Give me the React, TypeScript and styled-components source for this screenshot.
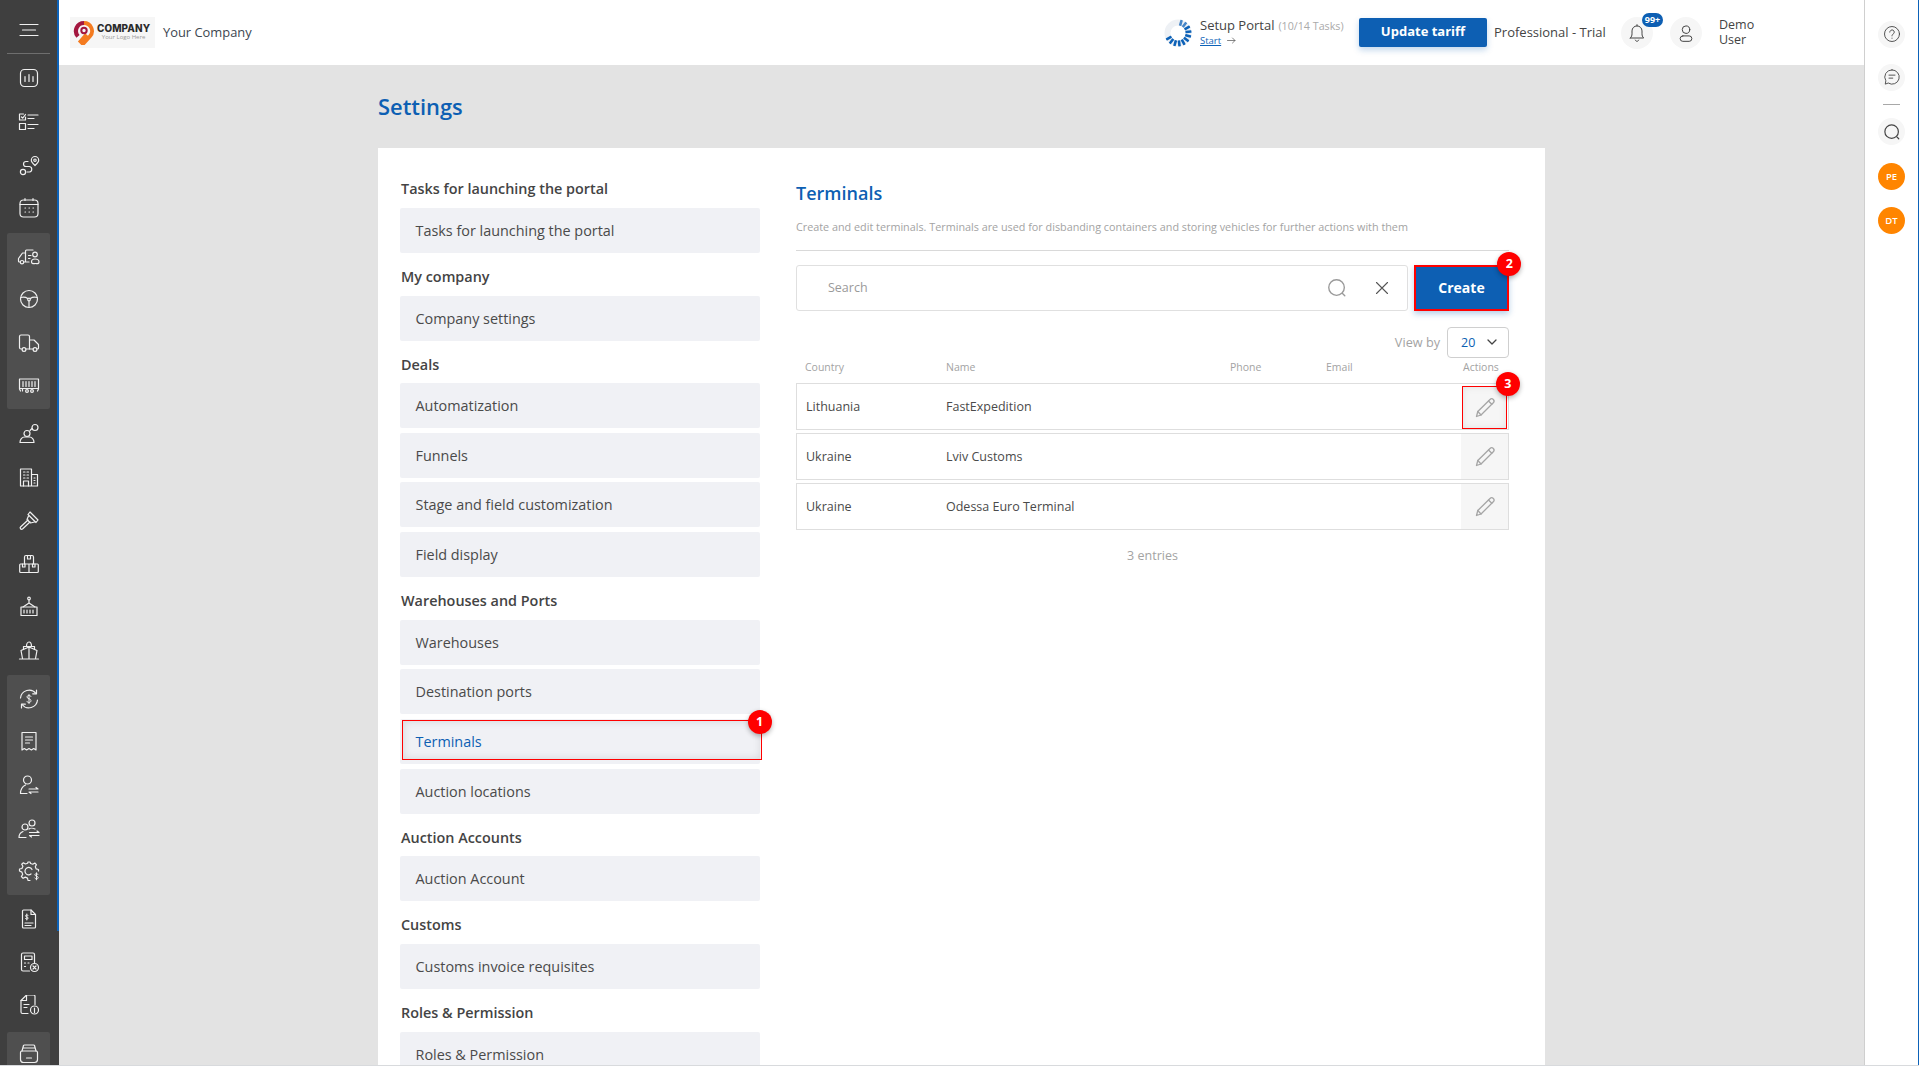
import styled, { createGlobalStyle } from "styled-components";
import type { ReactNode } from "react";

const GlobalStyle = createGlobalStyle`
  html, body {
    margin: 0;
    padding: 0;
    height: 100%;
    overflow: hidden;
    background: #fff;
    font-family: "Open Sans", "Liberation Sans", sans-serif;
    color: #444;
  }
  * { box-sizing: border-box; }
`;

const Page = styled.div`
  display: flex;
  height: 1066px;
  overflow: hidden;
  border-bottom: 1px solid #d8dadd;
`;

const Sidebar = styled.aside`
  position: relative;
  width: 59px;
  flex: none;
  background: #3f3f3f;
  &::after {
    content: "";
    position: absolute;
    top: 0;
    right: 0;
    width: 2px;
    height: 931px;
    background: #0d62b8;
  }
`;

const MenuTop = styled.div`
  height: 54px;
  margin: 0 9px 0 7px;
  display: flex;
  align-items: center;
  justify-content: center;
  padding-top: 6px;
  border-bottom: 1px solid #6e6e6e;
`;

const NavList = styled.nav`
  display: flex;
  flex-direction: column;
  padding-top: 2px;
`;

const NavGroup = styled.div`
  margin: 3px 9px 3px 7px;
  padding: 1.5px 0;
  background: #4f4f4f;
  border-radius: 2px;
`;

const NavItem = styled.div<{ $grouped?: boolean }>`
  height: 43.4px;
  display: flex;
  align-items: center;
  justify-content: center;
  margin: ${(p) => (p.$grouped ? "0" : "0 9px 0 7px")};
`;

const NavSvg = styled.svg`
  width: 24px;
  height: 24px;
  fill: none;
  stroke: #f0f0f0;
  stroke-width: 1.2;
  stroke-linecap: round;
  stroke-linejoin: round;
`;

const Main = styled.div`
  flex: 1;
  min-width: 0;
  display: flex;
  flex-direction: column;
`;

const Header = styled.header`
  height: 65px;
  flex: none;
  background: #fff;
  display: flex;
  align-items: center;
  padding-left: 11px;
`;

const LogoBox = styled.div`
  width: 85px;
  height: 31px;
  background: #f6f6f6;
  display: flex;
  align-items: center;
  padding-left: 3px;
  gap: 2px;
`;

const LogoPin = styled.svg`
  width: 22px;
  height: 25px;
  flex: none;
`;

const LogoText = styled.div`
  display: flex;
  flex-direction: column;
  align-items: center;
`;

const LogoName = styled.span`
  font-size: 9.9px;
  line-height: 10px;
  font-weight: 800;
  color: #2b2b2b;
  letter-spacing: 0.1px;
  font-family: "Inter", sans-serif;
`;

const LogoTag = styled.span`
  font-size: 6px;
  line-height: 9px;
  color: #9a9a9a;
`;

const CompanyName = styled.span`
  margin: 0 0 1px 8px;
  font-size: 12.9px;
  color: #3c4650;
`;

const HeaderRight = styled.div`
  margin-left: auto;
  display: flex;
  align-items: center;
`;

const Spinner = styled.svg`
  width: 28px;
  height: 28px;
  margin-right: 8px;
`;

const Setup = styled.div`
  width: 159px;
  margin-bottom: 2px;
  display: flex;
  flex-direction: column;
`;

const SetupTitle = styled.div`
  font-size: 13px;
  line-height: 16px;
  color: #444;
  white-space: nowrap;
`;

const SetupCount = styled.span`
  font-size: 10.7px;
  color: #aaa;
  margin-left: 4px;
`;

const StartLink = styled.div`
  font-size: 9.5px;
  line-height: 13px;
  color: #0d62b8;
  display: flex;
  align-items: center;
  gap: 6px;
  span {
    text-decoration: underline;
  }
`;

const UpdateButton = styled.button`
  width: 128px;
  height: 29px;
  border: none;
  border-radius: 2px;
  padding: 0 0 3px;
  background: #0d5fb3;
  color: #fff;
  font: 700 13px "Open Sans", sans-serif;
  box-shadow: 0 3px 6px rgba(13, 95, 179, 0.25);
`;

const Plan = styled.span`
  margin: 0 0 2px 7px;
  width: 127px;
  font-size: 13px;
  color: #444;
  white-space: nowrap;
`;

const RoundIcon = styled.div<{ $size?: number }>`
  position: relative;
  flex: none;
  width: ${(p) => p.$size ?? 32}px;
  height: ${(p) => p.$size ?? 32}px;
  border-radius: 50%;
  background: #f6f6f6;
  display: flex;
  align-items: center;
  justify-content: center;
`;

const UserIcon = styled(RoundIcon)`
  margin-left: 17px;
`;

const CountBadge = styled.span`
  position: absolute;
  top: -4px;
  right: -10px;
  width: 21px;
  height: 14px;
  border-radius: 7px;
  background: #0d5fb3;
  color: #fff;
  font-size: 9px;
  font-weight: 700;
  line-height: 14px;
  text-align: center;
`;

const UserName = styled.div`
  margin: 0 0 2px 17px;
  width: 145px;
  font-size: 12.5px;
  line-height: 15px;
  color: #444;
`;

const LineSvg = styled.svg<{ $stroke?: string; $width?: number }>`
  fill: none;
  stroke: ${(p) => p.$stroke ?? "#444"};
  stroke-width: ${(p) => p.$width ?? 1.2};
  stroke-linecap: round;
  stroke-linejoin: round;
`;

const Content = styled.main`
  flex: 1;
  min-height: 0;
  overflow: hidden;
  background: #e3e3e3;
  padding-top: 26px;
`;

const Wrap = styled.div`
  width: 1167px;
  margin: 0 auto;
`;

const PageTitle = styled.h1`
  margin: 0 0 25px;
  font-size: 21.9px;
  line-height: 32px;
  font-weight: 600;
  color: #0d5fb3;
`;

const Panel = styled.section`
  background: #fff;
  display: grid;
  grid-template-columns: 360px 713px;
  column-gap: 36px;
  padding: 21.8px 36px 40px 22px;
`;

const SideColumn = styled.div`
  display: flex;
  flex-direction: column;
`;

const GroupTitle = styled.div`
  margin: 7.6px 0 6.5px 1px;
  font-size: 14.4px;
  line-height: 24px;
  font-weight: 600;
  color: #444;
`;

const SideItem = styled.div<{ $active?: boolean }>`
  position: relative;
  height: 45px;
  margin-bottom: 4.6px;
  padding-left: 15.5px;
  display: flex;
  align-items: center;
  border-radius: 2px;
  background: #f0f1f5;
  font-size: 14.4px;
  color: ${(p) => (p.$active ? "#0d5fb3" : "#4a4a4a")};
`;

const Callout = styled.div`
  position: absolute;
  top: 1px;
  left: 2px;
  right: -2px;
  bottom: 4px;
  border: 1px solid #f00;
  box-shadow: inset 0 0 8px rgba(0, 0, 0, 0.12);
`;

const Marker = styled.span<{ $top: number; $right: number }>`
  position: absolute;
  top: ${(p) => -p.$top}px;
  right: ${(p) => -p.$right}px;
  z-index: 2;
  width: 24px;
  height: 24px;
  border-radius: 50%;
  background: #f00;
  color: #fff;
  font-size: 12.5px;
  font-weight: 700;
  line-height: 24px;
  text-align: center;
  box-shadow: 0 2px 5px rgba(0, 0, 0, 0.3);
`;

const TerminalsColumn = styled.div`
  display: flex;
  flex-direction: column;
`;

const TerminalsTitle = styled.h2`
  margin: 11.2px 0 0;
  font-size: 18px;
  line-height: 24px;
  font-weight: 600;
  color: #0d5fb3;
`;

const Description = styled.p`
  margin: 14.4px 0 0;
  padding-bottom: 14.2px;
  font-size: 10.8px;
  line-height: 16px;
  color: #a3a3a3;
  border-bottom: 1px solid #d9d9d9;
`;

const SearchRow = styled.div`
  margin-top: 14px;
  display: flex;
  gap: 6px;
`;

const SearchBox = styled.div`
  flex: 1;
  height: 46px;
  border: 1px solid #e0e0e0;
  border-radius: 3px;
  display: flex;
  align-items: center;
  padding: 0 18px 0 31px;
`;

const SearchPlaceholder = styled.span`
  flex: 1;
  font-size: 12.5px;
  color: #9a9a9a;
`;

const SearchClear = styled.span`
  margin-left: 27px;
  display: flex;
`;

const CreateButton = styled.button`
  position: relative;
  width: 95px;
  height: 46px;
  border: 2px solid #f00;
  background: #0d5fb3;
  color: #fff;
  font: 700 14px "Open Sans", sans-serif;
  box-shadow: 0 3px 6px rgba(13, 95, 179, 0.3);
`;

const ViewRow = styled.div`
  margin-top: 16px;
  display: flex;
  justify-content: flex-end;
  align-items: center;
  gap: 7px;
`;

const ViewLabel = styled.span`
  font-size: 12.7px;
  color: #a3a3a3;
`;

const ViewSelect = styled.div`
  width: 62px;
  height: 31px;
  border: 1px solid #cfcfcf;
  border-radius: 4px;
  display: flex;
  align-items: center;
  justify-content: space-between;
  padding: 0 11px 0 13px;
  font-size: 12.5px;
  color: #0d5fb3;
`;

const columns = "141px 284px 96px 1fr 46px";

const TableHead = styled.div`
  margin-top: 2px;
  height: 23.8px;
  display: grid;
  grid-template-columns: ${columns};
  align-items: start;
  padding-left: 9px;
  font-size: 10.5px;
  line-height: 15px;
  color: #a3a3a3;
`;

const HeadActions = styled.span`
  white-space: nowrap;
`;

const TableRow = styled.div`
  position: relative;
  height: 47px;
  margin-bottom: 3px;
  display: grid;
  grid-template-columns: 140px 283.5px 96px 1fr 47px;
  align-items: center;
  padding-left: 9px;
  border: 1px solid #dedede;
  font-size: 12.5px;
  color: #4a4a4a;
`;

const EditCell = styled.div<{ $marked?: boolean }>`
  position: relative;
  align-self: stretch;
  background: #f6f6f6;
  display: flex;
  align-items: center;
  justify-content: center;
  margin-left: ${(p) => (p.$marked ? "1px" : "0")};
  ${(p) =>
    p.$marked &&
    "outline: 1px solid #f00; outline-offset: -1px; margin-right: 1px; margin-top: 1.500px; box-shadow: inset 0 0 8px rgba(0,0,0,0.1);"}
`;

const EntryCount = styled.div`
  margin-top: 13px;
  text-align: center;
  font-size: 12.5px;
  line-height: 20px;
  color: #a3a3a3;
`;

const Rail = styled.aside`
  position: relative;
  width: 55px;
  flex: none;
  background: #fff;
  border-left: 1px solid #cfcfcf;
  border-right: 1px solid #0d62b8;
  display: flex;
  flex-direction: column;
  align-items: center;
  padding-top: 20.5px;
`;

const RailDivider = styled.div`
  width: 17px;
  height: 1px;
  background: #a8a8a8;
  margin: 13px 0 13.5px;
`;

const RailAvatar = styled.div`
  width: 27px;
  height: 27px;
  border-radius: 50%;
  background: #ff8500;
  color: #fff;
  font-size: 9.5px;
  font-weight: 600;
  line-height: 27px;
  text-align: center;
  margin-top: 17.5px;
`;

const RailGap = styled.div`
  height: 16px;
`;

const navIcons: Record<string, ReactNode> = {
  dashboard: (
    <>
      <rect x="3.500" y="3.500" width="17" height="17" rx="4" />
      <path d="M8 10.500v5M12 8.500v7M16 10.500v5" />
    </>
  ),
  tasks: (
    <g transform="translate(0 2)">
      <path d="M8.500 6v3h-6V3h4M4.500 6l1.200 1.200L8.500 3.500" />
      <rect x="2.500" y="12.500" width="6" height="6" />
      <path d="M11 4h10M11 7.500h6M11 13.500h10M11 17.500h6" />
    </g>
  ),
  route: (
    <g transform="translate(0 2)">
      <circle cx="6" cy="18" r="2.600" />
      <path d="M18 11.500c-2.200-2-3.700-3.500-3.700-5.300a3.700 3.700 0 0 1 7.400 0c0 1.800-1.500 3.300-3.700 5.300z" />
      <circle cx="18" cy="6.200" r="1.200" />
      <path d="M10 18h2.500a2.800 2.800 0 0 0 0-5.500H9a2.500 2.500 0 0 1 0-5h2" />
    </g>
  ),
  calendar: (
    <>
      <rect x="3" y="4" width="18" height="17" rx="3.500" />
      <path d="M3 8.500h18M8 2.500v2M16 2.500v2" />
      <path d="M8 12h.5M12 12h.5M16 12h.5M8 16h.5M12 16h.5M16 16h.5" />
    </>
  ),
  truckPerson: (
    <>
      <path d="M3.200 18H2.500c-.8 0-1-.5-1-1.200v-2.300L5.500 9h3V7c0-.6.400-1 1-1H16" />
      <path d="M12 18H7M8.500 9v9" />
      <circle cx="5" cy="18.200" r="1.700" />
      <path d="M11.500 11.500h2.500M11.500 14.500H13" />
      <circle cx="18" cy="10.500" r="2.300" />
      <path d="M14.500 18c0-2 1.500-3 3.500-3s4 1 4 3-1.500 1.500-3.500 1.500-4 .5-4-1.500z" />
    </>
  ),
  wheel: (
    <>
      <circle cx="12" cy="12" r="8.500" />
      <circle cx="12" cy="12.500" r="1.300" />
      <path d="M3.700 10.500c2.500-.5 5-.5 7 1M20.300 10.500c-2.500-.5-5-.5-7 1M12 14v6.500" />
    </>
  ),
  truck: (
    <>
      <path d="M5 18H4c-1 0-1.500-.5-1.500-1.500V5.500C2.500 4.500 3 4 4 4h7c1 0 1.500.5 1.500 1.500V18H9" />
      <path d="M12.500 9H17l4.500 4.500V17c0 .6-.4 1-1 1H20M16 18h-3.500" />
      <circle cx="7" cy="18.500" r="1.900" />
      <circle cx="18" cy="18.500" r="1.900" />
    </>
  ),
  container: (
    <>
      <path d="M2.500 5h19v10l-1 2M2.500 5v10l1 2M2.500 14.500h19" />
      <path d="M6 7.500v5M9 7.500v5M12 7.500v5M15 7.500v5M18 7.500v5" />
      <path d="M5.500 15v2" />
      <circle cx="10" cy="17" r="1.400" />
      <circle cx="15" cy="17" r="1.400" />
    </>
  ),
  personPin: (
    <>
      <circle cx="10" cy="11.500" r="3" />
      <path d="M3 20.500c0-3 2-5.500 4.500-5.500h5c2.500 0 4.500 2.500 4.500 5.500H3z" />
      <path d="M13 8.500l2-2" />
      <circle cx="18" cy="5.500" r="3" />
    </>
  ),
  building: (
    <>
      <path d="M3.500 21V4h11v17M14.500 9.500h6V21H3.500" />
      <path d="M6.500 7h1.500M10 7h1.500M6.500 10h1.500M10 10h1.500M6.500 13h1.500M10 13h1.500" />
      <path d="M6.500 21v-5h5v5M17 13h1M17 15.500h1M17 18h1" />
    </>
  ),
  gavel: (
    <>
      <path d="M13 3l8 8-2 2.500-8-8z" />
      <path d="M11.500 7l-1.500 3.500 3.500 3.500 4-1" />
      <path d="M11 11l-7.500 7c-1 1 .5 3 2 2l7.500-7" />
    </>
  ),
  boxes: (
    <>
      <path d="M7.500 12V5c0-1 .5-1.500 1.500-1.500h6c1 0 1.500.5 1.500 1.500v7" />
      <path d="M10.500 3.500v3.500h3V3.500" />
      <path d="M3.500 12h17c.6 0 .8.400.8 1v6.500c0 .6-.4 1-1 1H3.700c-.6 0-1-.4-1-1V13c0-.6.200-1 .8-1zM12 12v8.500" />
      <path d="M5.500 12v3h2.500v-3M15.500 12v3H18v-3" />
    </>
  ),
  crane: (
    <>
      <circle cx="12" cy="3.500" r="1.300" />
      <path d="M12 5v3M12 8L6 12M12 8l6 4" />
      <path d="M4 12h16v8.500H4zM7 15v3M10 15v3M13 15v3M16 15v3" />
    </>
  ),
  ship: (
    <g transform="translate(0 -1)">
      <path d="M2.500 21h19" />
      <path d="M5.500 20.500L4 12.500l8-3.500 8 3.500-1.500 8M12 9v11.500" />
      <path d="M6.500 11.500V8.500h11v3M9.500 8.500c0-2.500 1-4.500 2.500-4.500s2.500 2 2.500 4.500" />
    </g>
  ),
  refresh: (
    <>
      <path d="M3.500 11a8.700 8.700 0 0 1 15.500-4.500M20.500 13a8.700 8.700 0 0 1-15.500 4.500" />
      <path d="M19.500 3v3.800h-3.800M4.500 21v-3.800h3.800" />
      <path d="M14 9.500c-.5-.8-1-1-2-1-1.300 0-2 .6-2 1.500 0 2.200 4 1.300 4 3.700 0 1-.8 1.800-2 1.800-1 0-1.700-.4-2.200-1.200M12 7.500v9" strokeWidth="1" />
    </>
  ),
  receipt: (
    <g transform="translate(0 -1)">
      <path d="M5 3.500h14v17.500l-2.300-1.500-2.300 1.500-2.400-1.500-2.400 1.500-2.300-1.500L5 21z" />
      <path d="M8.500 8h7M8.500 11h7M8.500 14h4" />
    </g>
  ),
  userSwap: (
    <>
      <circle cx="10.500" cy="7" r="4" />
      <path d="M3.500 20.500c0-4 2-7 5-8.500M3.500 20.500H10" />
      <path d="M12 16h9l-2-1.500M21 19h-9l2 1.500" />
    </>
  ),
  usersSwap: (
    <>
      <circle cx="8" cy="10" r="3" />
      <circle cx="15" cy="6" r="3" />
      <path d="M2 20.500c0-3 1.500-5 4-6M2 20.500h7M12 12c1-1 4-1 6 0" />
      <path d="M12.500 15.500H22l-2-1.500M22 18.500h-9.500l2 1.500" />
    </>
  ),
  gearDollar: (
    <>
      <path d="M13 20.500h-2l-.5-2.400-2.200-1-2.200 1.200-1.700-1.800 1.300-2.100-.8-2.300L2.500 11V9l2.400-.5 1-2.200L4.700 4.300l1.700-1.500 2 1.200L10.600 3.300 11 2h2l.6 1.500 2.200.7 2-1.200 1.600 1.600-1.100 2.100.8 2.200 2.400.6v1.500" />
      <path d="M15 9.500A3.700 3.700 0 1 0 14 14" />
      <path d="M21 14.500c-.4-.6-.9-.8-1.600-.8-1 0-1.500.4-1.500 1.100 0 1.600 3.300 1 3.300 2.800 0 .8-.7 1.300-1.700 1.300-.8 0-1.400-.3-1.800-.9M19.500 12.800v7" strokeWidth="1" />
    </>
  ),
  docDollar: (
    <g transform="translate(0 -1)">
      <path d="M6.500 3h7.500l4.500 4.500V20c0 .8-.5 1-1 1h-11c-.5 0-1-.2-1-1V4c0-.8.5-1 1-1z" />
      <path d="M14 3v4.500h4.500M8 16h8M8 18.500h6" />
      <path d="M11 8.500c-.3-.4-.6-.6-1.200-.6-.8 0-1.300.4-1.300 1 0 1.300 2.700.8 2.700 2.200 0 .6-.6 1-1.400 1-.6 0-1.100-.2-1.400-.7M9.800 7v6" strokeWidth="1" />
    </g>
  ),
  calcX: (
    <g transform="translate(0 -2)">
      <path d="M12.500 21H6c-1 0-1.500-.5-1.500-1.500V4.500C4.500 3.500 5 3 6 3h10c1 0 1.500.5 1.500 1.500v8" />
      <path d="M7.500 6h7.500v3.500H7.500zM7.500 13h1M11 13h1M7.500 16.500h1" />
      <circle cx="17.500" cy="17.500" r="4" />
      <path d="M16 16l3 3M19 16l-3 3" />
    </g>
  ),
  docInfo: (
    <g transform="translate(0 -2.500)">
      <path d="M11 21H5.500c-1 0-1.500-.5-1.500-1.500V8l5.500-5.500h7c1 0 1.500.5 1.500 1.500v8" />
      <path d="M4 8h5.500V2.500M7 12h5M7 15h3" />
      <circle cx="17.500" cy="17.500" r="4" />
      <path d="M17.500 15.500v4.500" />
    </g>
  ),
  archive: (
    <g transform="translate(0 -1.500)">
      <path d="M5 9.500h14c1 0 1.500.5 1.500 1.500v7c0 2-1 3-3 3h-11c-2 0-3-1-3-3v-7c0-1 .5-1.500 1.500-1.500z" />
      <path d="M5 9.500L6.500 4c.2-.5.5-.5 1-.5h9c.5 0 .8 0 1 .5l1.500 5.500M6.500 6.500h11M9.500 16.500h5" />
    </g>
  ),
};

const NavIcon = ({ name, grouped }: { name: string; grouped?: boolean }) => (
  <NavItem $grouped={grouped}>
    <NavSvg viewBox="0 0 24 24">{navIcons[name]}</NavSvg>
  </NavItem>
);

const PencilIcon = () => (
  <LineSvg width="24" height="24" viewBox="0 0 24 24" $stroke="#a6a6a6" $width={1.300}>
    <path d="M3.500 20.500l1.300-5L17 3.500a2.300 2.300 0 0 1 3.300 3.300L8 19z" />
    <path d="M15.500 5l3.300 3.300M4.800 15.500L8 19" />
  </LineSvg>
);

const sideGroups = [
  { title: "Tasks for launching the portal", items: ["Tasks for launching the portal"] },
  { title: "My company", items: ["Company settings"] },
  {
    title: "Deals",
    items: ["Automatization", "Funnels", "Stage and field customization", "Field display"],
  },
  {
    title: "Warehouses and Ports",
    items: ["Warehouses", "Destination ports", "Terminals", "Auction locations"],
  },
  { title: "Auction Accounts", items: ["Auction Account"] },
  { title: "Customs", items: ["Customs invoice requisites"] },
  { title: "Roles & Permission", items: ["Roles & Permission"] },
];

const terminals = [
  { country: "Lithuania", name: "FastExpedition" },
  { country: "Ukraine", name: "Lviv Customs" },
  { country: "Ukraine", name: "Odessa Euro Terminal" },
];

// ticks run clockwise from the top, the last few are left out as the faded tail
const spinnerTicks = Array.from({ length: 11 }, (_, i) => i);

function App() {
  return (
    <>
      <GlobalStyle />
      <Page>
        <Sidebar>
          <MenuTop>
            <LineSvg width="20" height="14" viewBox="0 0 20 14" $stroke="#f0f0f0" $width={1.200}>
              <path d="M1 1.500h18M3.500 7h13M1 12.500h18" />
            </LineSvg>
          </MenuTop>
          <NavList>
            {["dashboard", "tasks", "route", "calendar"].map((n) => (
              <NavIcon key={n} name={n} />
            ))}
            <NavGroup>
              {["truckPerson", "wheel", "truck", "container"].map((n) => (
                <NavIcon key={n} name={n} grouped />
              ))}
            </NavGroup>
            {["personPin", "building", "gavel", "boxes", "crane", "ship"].map((n) => (
              <NavIcon key={n} name={n} />
            ))}
            <NavGroup>
              {["refresh", "receipt", "userSwap", "usersSwap", "gearDollar"].map((n) => (
                <NavIcon key={n} name={n} grouped />
              ))}
            </NavGroup>
            {["docDollar", "calcX", "docInfo"].map((n) => (
              <NavIcon key={n} name={n} />
            ))}
            <NavGroup>
              <NavIcon name="archive" grouped />
            </NavGroup>
          </NavList>
        </Sidebar>
        <Main>
          <Header>
            <LogoBox>
              <LogoPin viewBox="0 0 22 25">
                <path d="M11 3a8 8 0 0 0-6 13.300" fill="none" stroke="#a3173f" strokeWidth="4.200" />
                <path d="M11 3a8 8 0 0 1 6 13.300L10 24l-2.500-2.500 6-7" fill="none" stroke="#f47b20" strokeWidth="3.800" />
                <circle cx="11" cy="10.500" r="2.700" fill="none" stroke="#a3173f" strokeWidth="2" />
              </LogoPin>
              <LogoText>
                <LogoName>COMPANY</LogoName>
                <LogoTag>Your Logo Here</LogoTag>
              </LogoText>
            </LogoBox>
            <CompanyName>Your Company</CompanyName>
            <HeaderRight>
              <Spinner viewBox="0 0 28 28">
                <circle cx="14" cy="14" r="10.500" fill="none" stroke="#eef1f5" strokeWidth="6" />
                {spinnerTicks.map((i) => (
                  <rect
                    key={i}
                    x="12.700"
                    y="0.500"
                    width="2.600"
                    height="6"
                    rx="0.500"
                    fill="#0d62b8"
                    opacity={i < 2 ? 0.75 : 1}
                    transform={`rotate(${((i + 0.7) * 360) / 16} 14 14)`}
                  />
                ))}
              </Spinner>
              <Setup>
                <SetupTitle>
                  Setup Portal<SetupCount>(10/14 Tasks)</SetupCount>
                </SetupTitle>
                <StartLink>
                  <span>Start</span>
                  <LineSvg width="9" height="7" viewBox="0 0 9 7" $stroke="#666" $width={0.8}>
                    <path d="M.5 3.500h7.500M5.500 1l2.500 2.500L5.500 6" />
                  </LineSvg>
                </StartLink>
              </Setup>
              <UpdateButton>Update tariff</UpdateButton>
              <Plan>Professional - Trial</Plan>
              <RoundIcon>
                <LineSvg width="20" height="20" viewBox="0 0 24 24">
                  <path d="M4 18c1.500-1.500 2-3 2-5V9.500a6 6 0 0 1 12 0V13c0 2 .5 3.500 2 5H4z" />
                  <path d="M10 20.500c.5 1 1.200 1.500 2 1.500s1.500-.5 2-1.500M12 2v1.500" />
                </LineSvg>
                <CountBadge>99+</CountBadge>
              </RoundIcon>
              <UserIcon>
                <LineSvg width="20" height="20" viewBox="0 0 24 24">
                  <circle cx="12" cy="8" r="4.500" />
                  <rect x="5" y="15.500" width="14" height="6.500" rx="3.200" />
                </LineSvg>
              </UserIcon>
              <UserName>
                Demo
                <br />
                User
              </UserName>
            </HeaderRight>
          </Header>
          <Content>
            <Wrap>
              <PageTitle>Settings</PageTitle>
              <Panel>
                <SideColumn>
                  {sideGroups.map((group) => (
                    <div key={group.title}>
                      <GroupTitle>{group.title}</GroupTitle>
                      {group.items.map((item) => (
                        <SideItem key={item} $active={item === "Terminals"}>
                          {item}
                          {item === "Terminals" && (
                            <Callout>
                              <Marker $top={11.300} $right={10.700}>1</Marker>
                            </Callout>
                          )}
                        </SideItem>
                      ))}
                    </div>
                  ))}
                </SideColumn>
                <TerminalsColumn>
                  <TerminalsTitle>Terminals</TerminalsTitle>
                  <Description>
                    Create and edit terminals. Terminals are used for disbanding containers and
                    storing vehicles for further actions with them
                  </Description>
                  <SearchRow>
                    <SearchBox>
                      <SearchPlaceholder>Search</SearchPlaceholder>
                      <LineSvg width="22" height="22" viewBox="0 0 24 24" $stroke="#9a9a9a" $width={1.500}>
                        <circle cx="11.500" cy="11.500" r="8.500" />
                        <path d="M18 18l2.500 2.500" />
                      </LineSvg>
                      <SearchClear>
                        <LineSvg width="14" height="14" viewBox="0 0 14 14" $stroke="#555" $width={1.100}>
                          <path d="M1.500 1.500l11 11M12.500 1.500l-11 11" />
                        </LineSvg>
                      </SearchClear>
                    </SearchBox>
                    <CreateButton>
                      Create
                      <Marker $top={14.400} $right={14.400}>2</Marker>
                    </CreateButton>
                  </SearchRow>
                  <ViewRow>
                    <ViewLabel>View by</ViewLabel>
                    <ViewSelect>
                      20
                      <LineSvg width="10" height="6" viewBox="0 0 10 6" $stroke="#444" $width={1.300}>
                        <path d="M1 1l4 4 4-4" />
                      </LineSvg>
                    </ViewSelect>
                  </ViewRow>
                  <TableHead>
                    <span>Country</span>
                    <span>Name</span>
                    <span>Phone</span>
                    <span>Email</span>
                    <HeadActions>Actions</HeadActions>
                  </TableHead>
                  {terminals.map((row, i) => (
                    <TableRow key={row.name}>
                      <span>{row.country}</span>
                      <span>{row.name}</span>
                      <span />
                      <span />
                      <EditCell $marked={i === 0}>
                        <PencilIcon />
                        {i === 0 && <Marker $top={14.300} $right={12.900}>3</Marker>}
                      </EditCell>
                    </TableRow>
                  ))}
                  <EntryCount>3 entries</EntryCount>
                </TerminalsColumn>
              </Panel>
            </Wrap>
          </Content>
        </Main>
        <Rail>
          <RoundIcon $size={27}>
            <LineSvg width="18" height="18" viewBox="0 0 24 24">
              <circle cx="12" cy="12" r="10" />
              <path d="M9 9.500a3 3 0 1 1 4.500 2.600c-1 .6-1.500 1.200-1.500 2.400M12 17.500v.3" />
            </LineSvg>
          </RoundIcon>
          <RailGap />
          <RoundIcon $size={27}>
            <LineSvg width="18" height="18" viewBox="0 0 24 24">
              <path d="M12 2.500a9.500 9.500 0 1 1-5 17.500l-4 1.500.8-4.500A9.500 9.500 0 0 1 12 2.500z" />
              <path d="M8 9.500h8M8 13.500h5" />
            </LineSvg>
          </RoundIcon>
          <RailDivider />
          <RoundIcon $size={27}>
            <LineSvg width="18" height="18" viewBox="0 0 24 24" $width={1.600}>
              <circle cx="11.500" cy="11.500" r="9" />
              <path d="M18.500 18.500l2.500 2.500" />
            </LineSvg>
          </RoundIcon>
          <RailAvatar>PE</RailAvatar>
          <RailAvatar>DT</RailAvatar>
        </Rail>
      </Page>
    </>
  );
}

export default App;
